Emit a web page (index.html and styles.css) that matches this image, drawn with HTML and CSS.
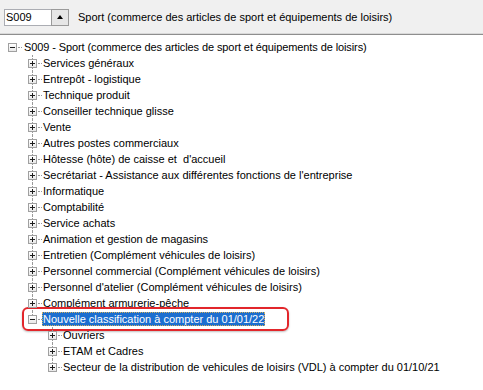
FILE: index.html
```html
<!DOCTYPE html>
<html lang="fr">
<head>
  <meta charset="UTF-8" />
  <title>Conventions collectives</title>
  <link rel="stylesheet" href="styles.css">
</head>
<body>
  <div class="toolbar">
    <div class="code-field">S009</div>
    <div class="spin-btn"><span class="arrow"></span></div>
    <div class="code-title">Sport (commerce des articles de sport et équipements de loisirs)</div>
  </div>

  <ul class="tree">
    <li>
      <div class="node"><span class="box minus"></span><span class="dots"></span><span class="label">S009 - Sport (commerce des articles de sport et équipements de loisirs)</span></div>
      <ul>
        <li><div class="node"><span class="box plus"></span><span class="dots"></span><span class="label">Services généraux</span></div></li>
        <li><div class="node"><span class="box plus"></span><span class="dots"></span><span class="label">Entrepôt - logistique</span></div></li>
        <li><div class="node"><span class="box plus"></span><span class="dots"></span><span class="label">Technique produit</span></div></li>
        <li><div class="node"><span class="box plus"></span><span class="dots"></span><span class="label">Conseiller technique glisse</span></div></li>
        <li><div class="node"><span class="box plus"></span><span class="dots"></span><span class="label">Vente</span></div></li>
        <li><div class="node"><span class="box plus"></span><span class="dots"></span><span class="label">Autres postes commerciaux</span></div></li>
        <li><div class="node"><span class="box plus"></span><span class="dots"></span><span class="label">Hôtesse (hôte) de caisse et&nbsp; d'accueil</span></div></li>
        <li><div class="node"><span class="box plus"></span><span class="dots"></span><span class="label">Secrétariat - Assistance aux différentes fonctions de l'entreprise</span></div></li>
        <li><div class="node"><span class="box plus"></span><span class="dots"></span><span class="label">Informatique</span></div></li>
        <li><div class="node"><span class="box plus"></span><span class="dots"></span><span class="label">Comptabilité</span></div></li>
        <li><div class="node"><span class="box plus"></span><span class="dots"></span><span class="label">Service achats</span></div></li>
        <li><div class="node"><span class="box plus"></span><span class="dots"></span><span class="label">Animation et gestion de magasins</span></div></li>
        <li><div class="node"><span class="box plus"></span><span class="dots"></span><span class="label">Entretien (Complément véhicules de loisirs)</span></div></li>
        <li><div class="node"><span class="box plus"></span><span class="dots"></span><span class="label">Personnel commercial (Complément véhicules de loisirs)</span></div></li>
        <li><div class="node"><span class="box plus"></span><span class="dots"></span><span class="label">Personnel d'atelier (Complément véhicules de loisirs)</span></div></li>
        <li><div class="node"><span class="box plus"></span><span class="dots"></span><span class="label">Complément armurerie-pêche</span></div></li>
        <li>
          <div class="node"><span class="mark"></span><span class="box minus"></span><span class="dots"></span><span class="label selected">Nouvelle classification à compter du 01/01/22</span></div>
          <ul>
            <li><div class="node"><span class="box plus"></span><span class="dots"></span><span class="label">Ouvriers</span></div></li>
            <li><div class="node"><span class="box plus"></span><span class="dots"></span><span class="label">ETAM et Cadres</span></div></li>
            <li><div class="node"><span class="box plus"></span><span class="dots"></span><span class="label">Secteur de la distribution de vehicules de loisirs (VDL) à compter du 01/10/21</span></div></li>
          </ul>
        </li>
      </ul>
    </li>
  </ul>
</body>
</html>
```

FILE: styles.css
```css
body {
  margin: 0;
  background: #fff;
  font-family: "Liberation Sans", Arial, sans-serif;
  font-size: 11px;
  color: #000;
}
.toolbar {
  display: flex;
  align-items: center;
  height: 34px;
  padding-left: 4px;
  background: #f0f0f0;
  border-bottom: 1px solid #8e8e8e;
  box-shadow: inset 0 -1px #d9d9d9;
}
.code-field {
  width: 45px;
  height: 15px;
  line-height: 15px;
  padding-left: 1px;
  background: #fff;
  border: 1px solid #abadb3;
  border-right: none;
  font-size: 11px;
}
.spin-btn {
  width: 16px;
  height: 15px;
  display: flex;
  align-items: center;
  justify-content: center;
  background: #e6e6e6;
  border: 1px solid #9a9a9a;
}
.arrow {
  width: 0;
  height: 0;
  border-left: 3px solid transparent;
  border-right: 3px solid transparent;
  border-bottom: 4px solid #000;
}
.code-title {
  margin-left: 9px;
  font-size: 11px;
}
.tree, .tree ul {
  list-style: none;
  margin: 0;
  padding: 0;
}
.tree {
  padding: 4px 0 0 8px;
}
.tree ul {
  padding-left: 20px;
}
.tree li {
  position: relative;
}
/* lignes pointillées verticales entre frères */
.tree ul > li::before {
  content: "";
  position: absolute;
  left: 4px;
  top: 0;
  bottom: 0;
  border-left: 1px dotted #9a9a9a;
}
.tree ul > li:last-child::before {
  bottom: auto;
  height: 8px;
}
.node {
  position: relative;
  display: flex;
  align-items: center;
  height: 16px;
}
.box {
  position: relative;
  z-index: 1;
  width: 7px;
  height: 7px;
  flex: none;
  border: 1px solid #a0a0a0;
  background: linear-gradient(#fff, #e8e8e8);
}
.box::before, .plus::after {
  content: "";
  position: absolute;
  background: #1e1e1e;
}
.box::before {
  left: 1px;
  top: 3px;
  width: 5px;
  height: 1px;
}
.plus::after {
  left: 3px;
  top: 1px;
  width: 1px;
  height: 5px;
}
.dots {
  width: 4px;
  margin-left: 1px;
  border-top: 1px dotted #9a9a9a;
}
.label {
  padding: 1px 1px;
  white-space: nowrap;
  line-height: 12px;
}
.tree > li > .node .label {
  margin-left: 1px;
  letter-spacing: -0.1px;
}
.selected {
  background: #1c6ecf;
  color: #fff;
  outline: 1px dotted #d0b060;
  outline-offset: -1px;
}
.mark {
  position: absolute;
  left: -6px;
  top: -4px;
  width: 263px;
  height: 20px;
  border: 2px solid #e2262b;
  border-radius: 6px;
  box-shadow: 0 1px 2px rgba(0,0,0,0.25);
}
```
